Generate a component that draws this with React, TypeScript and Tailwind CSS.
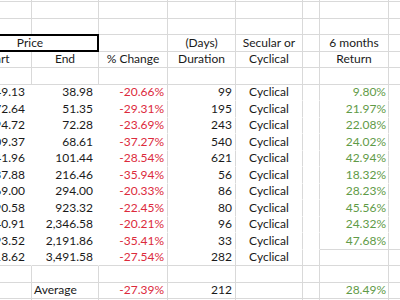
import React from 'react';

// start, end, % change, days, secular/cyclical, 6 month return
const rows = [
    ['49.13', '38.98', '-20.66%', '99', 'Cyclical', '9.80%'],
    ['72.64', '51.35', '-29.31%', '195', 'Cyclical', '21.97%'],
    ['94.72', '72.28', '-23.69%', '243', 'Cyclical', '22.08%'],
    ['109.37', '68.61', '-37.27%', '540', 'Cyclical', '24.02%'],
    ['141.96', '101.44', '-28.54%', '621', 'Cyclical', '42.94%'],
    ['337.88', '216.46', '-35.94%', '56', 'Cyclical', '18.32%'],
    ['369.00', '294.00', '-20.33%', '86', 'Cyclical', '28.23%'],
    ['1,190.58', '923.32', '-22.45%', '80', 'Cyclical', '45.56%'],
    ['2,940.91', '2,346.58', '-20.21%', '96', 'Cyclical', '24.32%'],
    ['3,393.52', '2,191.86', '-35.41%', '33', 'Cyclical', '47.68%'],
    ['4,818.62', '3,491.58', '-27.54%', '282', 'Cyclical', ''],
];

const line = 'border-r border-b border-[#d9d9d9]';

function Blank({ n = 8 }: { n?: number }) {
    return (
        <>
            {Array.from({ length: n }).map((_, i) => (
                <div key={i} className={line} />
            ))}
        </>
    );
}

export default function App() {
    return (
        <div className="w-[400px] h-[300px] overflow-hidden bg-white text-[12px] text-[#1a1a1a] [font-family:Lato,sans-serif]">
            <div className="ml-[-37px] mt-[-14.5px] grid grid-cols-[69px_67px_69px_68px_67px_17px_69px_68px] auto-rows-[16.5px] leading-none">
                <Blank />
                <Blank />
                <Blank />

                {/* header 1 */}
                <div className="col-span-2 -mt-px border-t-2 border-r-2 border-b-2 border-black flex items-center justify-center">Price</div>
                <div className={line} />
                <div className={`${line} flex items-center justify-center`}>(Days)</div>
                <div className={`${line} flex items-center justify-center`}>Secular or</div>
                <div className={line} />
                <div className={`${line} flex items-center justify-center`}>6 months</div>
                <div className={line} />

                {/* header 2 */}
                <div className={`${line} flex items-center justify-center`}>Start</div>
                <div className={`${line} flex items-center justify-center`}>End</div>
                <div className={`${line} flex items-center justify-center`}>% Change</div>
                <div className={`${line} flex items-center justify-center`}>Duration</div>
                <div className={`${line} flex items-center justify-center`}>Cyclical</div>
                <div className={line} />
                <div className={`${line} flex items-center justify-center`}>Return</div>
                <div className={line} />

                <Blank />

                {rows.map((r, i) => {
                    const last = i === rows.length - 1;
                    const hb = last ? '' : 'border-b-white';
                    const retB = i >= rows.length - 2 ? '' : 'border-b-white';
                    return (
                        <React.Fragment key={i}>
                            <div className={`${line} ${hb} border-r-white flex items-center justify-end pr-[6px]`}>{r[0]}</div>
                            <div className={`${line} ${hb} border-r-white flex items-center justify-end pr-[5px]`}>{r[1]}</div>
                            <div className={`${line} ${hb} flex items-center justify-end pr-[3px] text-[#dc2a3c]`}>{r[2]}</div>
                            <div className={`${line} ${hb} flex items-center justify-end pr-[3px]`}>{r[3]}</div>
                            <div className={`${line} ${hb} flex items-center justify-center`}>{r[4]}</div>
                            <div className={`${line} ${hb}`} />
                            <div className={`${line} ${retB} flex items-center justify-end pr-[2px] text-[#5f9b47]`}>{r[5]}</div>
                            <div className={`${line} ${retB}`} />
                        </React.Fragment>
                    );
                })}

                <Blank />

                {/* average row */}
                <div className={line} />
                <div className={`${line} flex items-center pl-[2px]`}>Average</div>
                <div className={`${line} flex items-center justify-end pr-[3px] text-[#dc2a3c]`}>-27.39%</div>
                <div className={`${line} flex items-center justify-end pr-[3px]`}>212</div>
                <div className={line} />
                <div className={line} />
                <div className={`${line} flex items-center justify-end pr-[2px] text-[#5f9b47]`}>28.49%</div>
                <div className={line} />

                <Blank />
            </div>
        </div>
    );
}
